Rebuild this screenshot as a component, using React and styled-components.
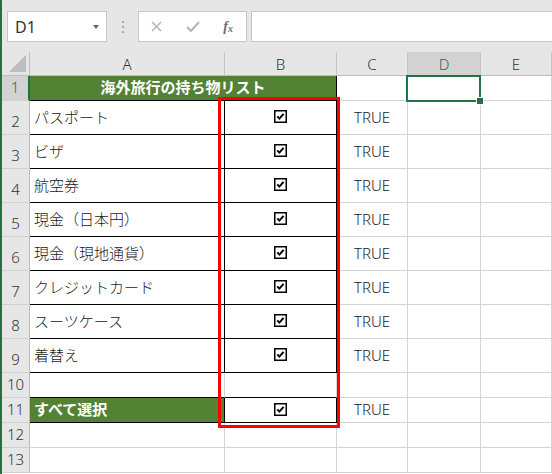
import React from "react";
import styled, { createGlobalStyle } from "styled-components";

const GlobalStyle = createGlobalStyle`
  html, body {
    margin: 0;
    padding: 0;
    background: #fff;
  }
  body {
    font-family: "Noto Sans", "Noto Sans CJK JP", sans-serif;
    overflow: hidden;
  }
`;

const Window = styled.div`
  width: 552px;
  height: 474px;
  box-sizing: border-box;
  border-left: 2px solid #217346;
  background: #fff;
  overflow: hidden;
`;

const Toolbar = styled.div`
  height: 52px;
  box-sizing: border-box;
  padding: 11px 0 0 5px;
  background: #e6e6e6;
  display: flex;
  align-items: flex-start;
`;

const NameBox = styled.div`
  width: 100px;
  height: 31px;
  box-sizing: border-box;
  border: 1px solid #c6c6c6;
  background: #fff;
  display: flex;
  align-items: center;
  justify-content: space-between;
  padding: 0 7px 0 7px;
  font-size: 16px;
  color: #333;
`;

const Arrow = styled.span`
  width: 0;
  height: 0;
  border-left: 3.5px solid transparent;
  border-right: 3.5px solid transparent;
  border-top: 4px solid #666;
`;

const Grip = styled.div`
  width: 31px;
  height: 31px;
  display: flex;
  flex-direction: column;
  align-items: center;
  justify-content: center;
  gap: 3px;
`;

const Dot = styled.span`
  width: 2px;
  height: 2px;
  background: #a8a8a8;
`;

const FxGroup = styled.div`
  width: 109px;
  height: 31px;
  box-sizing: border-box;
  border: 1px solid #c6c6c6;
  background: #fff;
  display: flex;
`;

const FxButton = styled.div`
  width: 36px;
  display: flex;
  align-items: center;
  justify-content: center;
  color: #b4b4b4;
`;

const FxLabel = styled.span`
  font-family: "Liberation Serif", serif;
  font-style: italic;
  font-weight: 700;
  font-size: 14px;
  color: #6d6d6d;
  sub {
    font-size: 10px;
    vertical-align: -1px;
  }
`;

const FormulaInput = styled.div`
  flex: 1;
  height: 31px;
  margin-left: 4px;
  box-sizing: border-box;
  border: 1px solid #c6c6c6;
  border-right: none;
  background: #fff;
`;

const Sheet = styled.div`
  position: relative;
  display: grid;
  grid-template-columns: 28px 195px 112px 71px 73px 1fr;
  grid-template-rows: 24px 25px repeat(8, 34px) 25px 25px 25px 25px;
`;

const Corner = styled.div`
  box-sizing: border-box;
  background: #e6e6e6;
  border-right: 1px solid #bdbdbd;
  border-bottom: 1px solid #bdbdbd;
  display: flex;
  align-items: flex-end;
  justify-content: flex-end;
  padding: 0 3px 3px 0;
`;

const ColHead = styled.div`
  box-sizing: border-box;
  background: ${(p) => (p.$active ? "#d2d2d2" : "#e6e6e6")};
  color: ${(p) => (p.$active ? "#217346" : "#333")};
  border-right: 1px solid #c6c6c6;
  border-bottom: 1px solid #bdbdbd;
  display: flex;
  align-items: center;
  justify-content: center;
  font-size: 15px;
  font-weight: 300;
`;

const RowHead = styled.div`
  box-sizing: border-box;
  background: ${(p) => (p.$active ? "#d2d2d2" : "#e6e6e6")};
  color: ${(p) => (p.$active ? "#217346" : "#333")};
  border-right: ${(p) => (p.$active ? "2px solid #217346" : "1px solid #bdbdbd")};
  border-bottom: 1px solid #d0d0d0;
  display: flex;
  align-items: flex-end;
  justify-content: center;
  padding-bottom: 3px;
  font-size: 15px;
  font-weight: 300;
  line-height: 20px;
`;

const Cell = styled.div`
  box-sizing: border-box;
  grid-column: ${(p) => (p.$span ? `span ${p.$span}` : "auto")};
  display: flex;
  align-items: center;
  justify-content: ${(p) => (p.$center ? "center" : "flex-start")};
  padding: 0 4px 2px;
  background: ${(p) => (p.$fill ? "#548235" : "#fff")};
  color: ${(p) => (p.$fill ? "#fff" : "#1a1a1a")};
  font-weight: ${(p) => (p.$fill ? 700 : 300)};
  border-right: 1px solid ${(p) => (p.$r ? "#000" : "#d4d4d4")};
  border-bottom: 1px solid ${(p) => (p.$b ? "#000" : "#d4d4d4")};
  font-size: 15px;
  line-height: 20px;
  white-space: nowrap;
  overflow: hidden;
`;

const Selection = styled.div`
  position: absolute;
  left: 404px;
  top: 23px;
  width: 75px;
  height: 27px;
  box-sizing: border-box;
  border: 2px solid #217346;
  pointer-events: none;
`;

const FillHandle = styled.span`
  position: absolute;
  right: -5px;
  bottom: -5px;
  width: 6px;
  height: 6px;
  background: #217346;
  border: 1px solid #fff;
`;

const Highlight = styled.div`
  position: absolute;
  left: 216px;
  top: 45px;
  width: 122px;
  height: 331px;
  box-sizing: border-box;
  border: 3px solid #ff0000;
  pointer-events: none;
`;

const CornerMark = () => (
  <svg width="17" height="17" viewBox="0 0 17 17">
    <polygon points="17,0 17,17 0,17" fill="#bdbdbd" />
  </svg>
);

const CheckBox = () => (
  <svg width="13" height="13" viewBox="0 0 13 13">
    <rect x="0.75" y="0.75" width="11.5" height="11.5" fill="#fff" stroke="#000" strokeWidth="1.5" />
    <path d="M3.3 6.3 L5.4 8.6 L9.6 3.9" fill="none" stroke="#000" strokeWidth="2" />
  </svg>
);

const items = [
  "パスポート",
  "ビザ",
  "航空券",
  "現金（日本円）",
  "現金（現地通貨）",
  "クレジットカード",
  "スーツケース",
  "着替え",
];

const Blank = ({ n }) =>
  Array.from({ length: n }).map((_, i) => <Cell key={i} />);

export default function App() {
  return (
    <Window>
      <GlobalStyle />
      <Toolbar>
        <NameBox>
          D1
          <Arrow />
        </NameBox>
        <Grip>
          <Dot />
          <Dot />
          <Dot />
        </Grip>
        <FxGroup>
          <FxButton>
            <svg width="11" height="11" viewBox="0 0 11 11">
              <path d="M1 1 L10 10 M10 1 L1 10" stroke="currentColor" strokeWidth="1.5" />
            </svg>
          </FxButton>
          <FxButton>
            <svg width="14" height="11" viewBox="0 0 14 11">
              <path d="M1 6 L5 10 L13 1" fill="none" stroke="currentColor" strokeWidth="2" />
            </svg>
          </FxButton>
          <FxButton>
            <FxLabel>
              f<sub>x</sub>
            </FxLabel>
          </FxButton>
        </FxGroup>
        <FormulaInput />
      </Toolbar>

      <Sheet>
        <Corner>
          <CornerMark />
        </Corner>
        <ColHead>A</ColHead>
        <ColHead>B</ColHead>
        <ColHead>C</ColHead>
        <ColHead $active>D</ColHead>
        <ColHead>E</ColHead>

        <RowHead $active>1</RowHead>
        <Cell $span={2} $fill $center $r $b>
          海外旅行の持ち物リスト
        </Cell>
        <Blank n={3} />

        {items.map((item, i) => (
          <React.Fragment key={item}>
            <RowHead>{i + 2}</RowHead>
            <Cell $r $b>{item}</Cell>
            <Cell $r $b $center>
              <CheckBox />
            </Cell>
            <Cell $center>TRUE</Cell>
            <Cell />
            <Cell />
          </React.Fragment>
        ))}

        <RowHead>10</RowHead>
        <Cell $b />
        <Cell $b />
        <Blank n={3} />

        <RowHead>11</RowHead>
        <Cell $fill $r $b>すべて選択</Cell>
        <Cell $r $b $center>
          <CheckBox />
        </Cell>
        <Cell $center>TRUE</Cell>
        <Cell />
        <Cell />

        <RowHead>12</RowHead>
        <Blank n={5} />
        <RowHead>13</RowHead>
        <Blank n={5} />

        <Selection>
          <FillHandle />
        </Selection>
        <Highlight />
      </Sheet>
    </Window>
  );
}
